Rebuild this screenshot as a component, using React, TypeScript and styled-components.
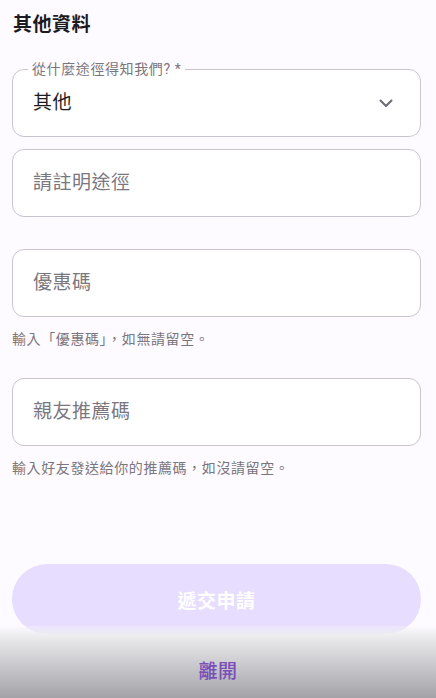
import * as React from 'react';
import styled, { createGlobalStyle } from 'styled-components';

const GlobalStyle = createGlobalStyle`
  html, body {
    margin: 0;
    padding: 0;
    background: #fdfbff;
  }
  body {
    font-family: Roboto, "Noto Sans CJK TC", sans-serif;
    color: #1c1b1f;
  }
`;

const Page = styled.div`
  height: 698px;
  display: flex;
  flex-direction: column;
  overflow: hidden;
  background: #fdfbff;
`;

const Form = styled.div`
  flex: 1;
  display: flex;
  flex-direction: column;
  padding: 12px 15px 0 12px;
`;

const Title = styled.h2`
  margin: 0 0 32px 1px;
  font-size: 19px;
  line-height: 25px;
  letter-spacing: 0.5px;
  font-weight: 700;
  color: #1c1b1f;
`;

type groupProps = { gap?: number };
const Group = styled.div<groupProps>`
  display: flex;
  flex-direction: column;
  margin-bottom: ${({ gap }) => gap ?? 12}px;
`;

const Field = styled.div`
  position: relative;
  height: 68px;
  box-sizing: border-box;
  border: 1px solid #cac4d0;
  border-radius: 12px;
  background: #ffffff;
  display: flex;
  align-items: center;
  justify-content: space-between;
  padding: 0 27px 0 20px;
`;

const Legend = styled.span`
  position: absolute;
  top: -10px;
  left: 15px;
  padding: 0 4px;
  background: linear-gradient(#fdfbff 50%, #ffffff 50%);
  font-size: 14px;
  line-height: 18px;
  letter-spacing: 0.6px;
  color: #79767d;
`;

type textProps = { placeholder?: boolean };
const FieldText = styled.span<textProps>`
  font-size: 19px;
  line-height: 26px;
  letter-spacing: 0.5px;
  color: ${({ placeholder }) => (placeholder ? '#7a777f' : '#1c1b1f')};
`;

const Helper = styled.p`
  margin: 13px 0 0 0;
  font-size: 14px;
  line-height: 18px;
  letter-spacing: 0.6px;
  color: #79767d;
`;

const Spacer = styled.div`
  flex: 1;
`;

const SubmitButton = styled.button`
  height: 70px;
  width: 409px;
  border: none;
  border-radius: 35px;
  background: #e6ddff;
  color: #ffffff;
  font-family: Roboto, "Noto Sans CJK TC", sans-serif;
  font-size: 19px;
  letter-spacing: 0.5px;
  font-weight: 700;
  padding: 0;
`;

const Footer = styled.div`
  height: 72px;
  margin-top: -8px;
  position: relative;
  display: flex;
  align-items: center;
  justify-content: center;
  padding-top: 14px;
  box-sizing: border-box;
  background: linear-gradient(rgba(250, 249, 252, 0.3) 0%, #ecebee 14%, #c9c8cc 55%, #a3a2a6 100%);
  color: #7a4fb8;
  font-size: 19px;
  letter-spacing: 0.5px;
  font-weight: 500;
`;

function Chevron() {
  return (
    <svg width="14" height="9" viewBox="0 0 14 9">
      <path d="M1.5 1.5 L7 7 L12.5 1.5" fill="none" stroke="#6e6b72" strokeWidth="2.1" strokeLinecap="round" strokeLinejoin="round" />
    </svg>
  );
}

export default function App() {
  return (
    <Page>
      <GlobalStyle />
      <Form>
        <Title>其他資料</Title>
        <Group>
          <Field>
            <Legend>從什麼途徑得知我們? *</Legend>
            <FieldText>其他</FieldText>
            <Chevron />
          </Field>
        </Group>
        <Group gap={32}>
          <Field>
            <FieldText placeholder>請註明途徑</FieldText>
          </Field>
        </Group>
        <Group gap={30}>
          <Field>
            <FieldText placeholder>優惠碼</FieldText>
          </Field>
          <Helper>輸入「優惠碼」，如無請留空。</Helper>
        </Group>
        <Group gap={0}>
          <Field>
            <FieldText placeholder>親友推薦碼</FieldText>
          </Field>
          <Helper>輸入好友發送給你的推薦碼，如沒請留空。</Helper>
        </Group>
        <Spacer />
        <SubmitButton>遞交申請</SubmitButton>
      </Form>
      <Footer>離開</Footer>
    </Page>
  );
}
